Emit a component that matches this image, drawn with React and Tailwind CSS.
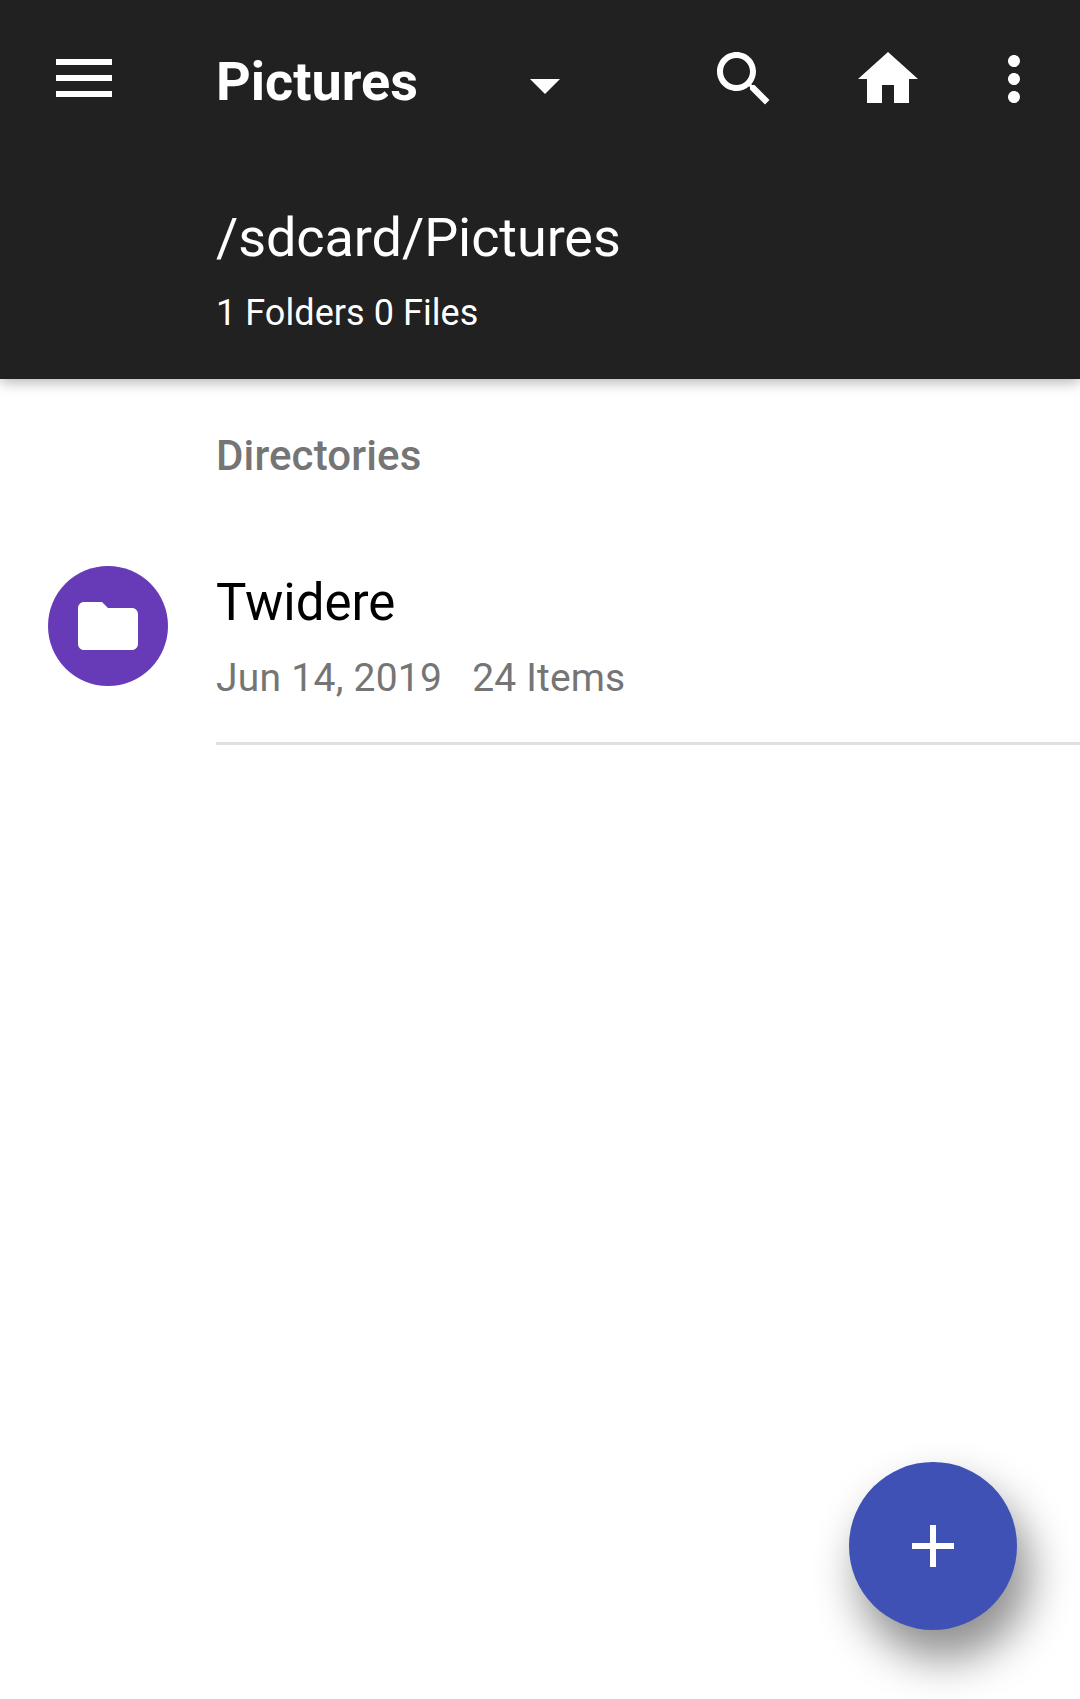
function Icon({ size, d, className = "" }) {
  return (
    <svg width={size} height={size} viewBox="0 0 24 24" fill="currentColor" className={"block shrink-0 " + className}>
      <path d={d} />
    </svg>
  );
}

export default function App() {
  return (
    <div className="relative h-[1699px] w-[1080px] overflow-hidden bg-white font-[Roboto,sans-serif]">
      <header className="h-[379px] bg-[#212121] text-white shadow-[0_4px_12px_rgba(0,0,0,0.27)]">
        <div className="flex h-[158px] items-center">
          <svg width="56" height="38" viewBox="0 0 56 38" fill="currentColor" className="mb-[2px] ml-[56px] block shrink-0">
            <path d="M0 0h56v6H0zM0 16h56v6H0zM0 32h56v6H0z" />
          </svg>
          <h1 className="ml-[104px] w-[293px] pt-[5px] text-[54px] font-bold leading-[64px]">Pictures</h1>
          <Icon size={72} className="mt-[12px]" d="M7 10l5 5 5-5z" />
          <Icon size={72} className="ml-[127px]" d="M15.5 14h-.79l-.28-.27C15.41 12.59 16 11.11 16 9.5 16 5.91 13.09 3 9.5 3S3 5.91 3 9.5 5.91 16 9.5 16c1.61 0 3.09-.59 4.23-1.57l.27.28v.79l5 4.99L20.49 19l-4.99-5zm-6 0C7.01 14 5 11.99 5 9.5S7.01 5 9.5 5 14 7.01 14 9.5 11.99 14 9.5 14z" />
          <Icon size={72} className="ml-[72px]" d="M10 20v-6h4v6h5v-8h3L12 3 2 12h3v8z" />
          <Icon size={72} className="ml-[54px]" d="M12 8c1.1 0 2-.9 2-2s-.9-2-2-2-2 .9-2 2 .9 2 2 2zm0 2c-1.1 0-2 .9-2 2s.9 2 2 2 2-.9 2-2-.9-2-2-2zm0 6c-1.1 0-2 .9-2 2s.9 2 2 2 2-.9 2-2-.9-2-2-2z" />
        </div>
        <div className="pl-[216px] pt-[48px]">
          <p className="text-[54px] leading-[64px] tracking-[-0.08px]">/sdcard/Pictures</p>
          <p className="mt-[22px] text-[36px] leading-[42px] tracking-[0.06px]">1 Folders 0 Files</p>
        </div>
      </header>
      <main>
        <h2 className="pl-[216px] pt-[52px] text-[42px] font-medium leading-[50px] tracking-[0.13px] text-[#757575]">Directories</h2>
        <div className="mt-[60px] flex">
          <div className="ml-12 mt-[25px] flex size-[120px] items-center justify-center rounded-full bg-[#673ab7] text-white">
            <Icon size={72} d="M10 4H4c-1.1 0-1.99.9-1.99 2L2 18c0 1.1.9 2 2 2h16c1.1 0 2-.9 2-2V8c0-1.1-.9-2-2-2h-8l-2-2z" />
          </div>
          <div className="ml-12 h-[204px] flex-1 border-b-[3px] border-[#e0e0e0] pt-[32px]">
            <p className="text-[51px] leading-[60px] text-black">Twidere</p>
            <p className="mt-[22px] flex gap-[30px] text-[39px] leading-[46px] text-[#757575]">
              <span className="tracking-[0.26px]">Jun 14, 2019</span>
              <span className="tracking-[0.16px]">24 Items</span>
            </p>
          </div>
        </div>
      </main>
      <button className="absolute bottom-[69px] right-[63px] flex size-[168px] items-center justify-center rounded-full bg-[#3f51b5] text-white shadow-[11px_27px_44px_2px_rgba(0,0,0,0.44)]">
        <Icon size={72} d="M19 13h-6v6h-2v-6H5v-2h6V5h2v6h6v2z" />
      </button>
    </div>
  );
}
